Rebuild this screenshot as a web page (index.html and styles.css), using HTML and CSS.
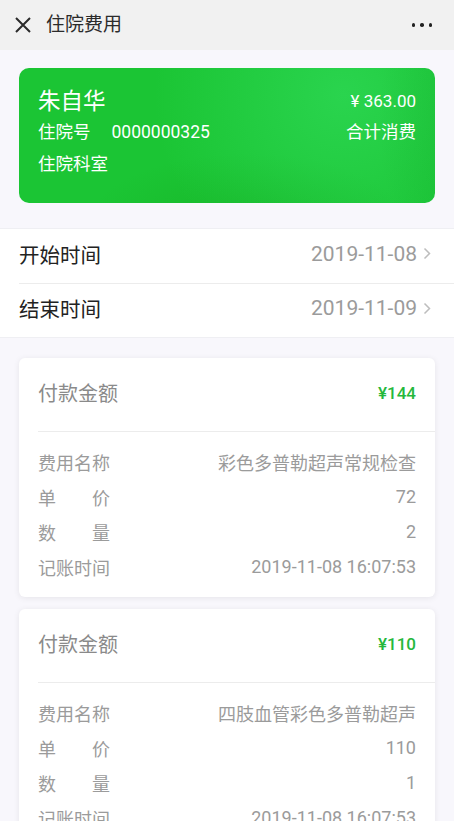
FILE: index.html
```html
<!DOCTYPE html>
<html lang="zh-CN">
<head>
  <meta charset="UTF-8" />
  <meta name="viewport" content="width=device-width, initial-scale=1" />
  <title>住院费用</title>
  <link rel="stylesheet" href="styles.css">
</head>
<body>
  <div class="topbar">
    <svg class="close-icon" width="16" height="16" viewBox="0 0 16 16">
      <path d="M1 1 L15 15 M15 1 L1 15" stroke="#2b2b2b" stroke-width="2" fill="none" />
    </svg>
    <span class="topbar-title">住院费用</span>
    <span class="more"><i></i><i></i><i></i></span>
  </div>

  <div class="patient-card">
    <div class="patient-row">
      <span class="patient-name">朱自华</span>
      <span class="patient-total">¥ 363.00</span>
    </div>
    <div class="patient-row">
      <span>住院号<span class="patient-no">0000000325</span></span>
      <span>合计消费</span>
    </div>
    <div class="patient-row">
      <span>住院科室</span>
    </div>
  </div>

  <div class="date-list">
    <div class="date-item">
      <span class="date-label">开始时间</span>
      <span class="date-value">2019-11-08
        <svg width="8" height="13" viewBox="0 0 8 13"><path d="M1.5 1.5 L6.5 6.5 L1.5 11.5" stroke="#bdbdbd" stroke-width="1.5" fill="none" /></svg>
      </span>
    </div>
    <div class="date-item">
      <span class="date-label">结束时间</span>
      <span class="date-value">2019-11-09
        <svg width="8" height="13" viewBox="0 0 8 13"><path d="M1.5 1.5 L6.5 6.5 L1.5 11.5" stroke="#bdbdbd" stroke-width="1.5" fill="none" /></svg>
      </span>
    </div>
  </div>

  <div class="fee-list">
    <div class="fee-card">
      <div class="fee-head">
        <span>付款金额</span>
        <span class="fee-amount">¥144</span>
      </div>
      <div class="fee-body">
        <div class="fee-row"><span class="fee-label">费用名称</span><span>彩色多普勒超声常规检查</span></div>
        <div class="fee-row"><span class="fee-label">单价</span><span>72</span></div>
        <div class="fee-row"><span class="fee-label">数量</span><span>2</span></div>
        <div class="fee-row"><span class="fee-label">记账时间</span><span>2019-11-08 16:07:53</span></div>
      </div>
    </div>

    <div class="fee-card">
      <div class="fee-head">
        <span>付款金额</span>
        <span class="fee-amount">¥110</span>
      </div>
      <div class="fee-body">
        <div class="fee-row"><span class="fee-label">费用名称</span><span>四肢血管彩色多普勒超声</span></div>
        <div class="fee-row"><span class="fee-label">单价</span><span>110</span></div>
        <div class="fee-row"><span class="fee-label">数量</span><span>1</span></div>
        <div class="fee-row"><span class="fee-label">记账时间</span><span>2019-11-08 16:07:53</span></div>
      </div>
    </div>
  </div>
</body>
</html>
```

FILE: styles.css
```css
body {
  font-family: Roboto, "Noto Sans CJK SC", sans-serif;
  background: #f8f7fc;
  margin: 0;
  padding: 0;
  color: #222;
}

/* top bar */
.topbar {
  height: 50px;
  background: #f1f1f1;
  display: flex;
  align-items: center;
  padding: 0 15px;
}
.close-icon {
  margin-right: 15px;
}
.topbar-title {
  font-size: 19px;
  line-height: 50px;
  color: #2b2b2b;
  flex: 1;
}
.more {
  display: flex;
  gap: 5px;
  margin-right: 7px;
}
.more i {
  width: 3.5px;
  height: 3.5px;
  border-radius: 50%;
  background: #222;
}

/* green card */
.patient-card {
  margin: 18px 19px 0;
  height: 135px;
  box-sizing: border-box;
  padding: 18px 19px 0;
  border-radius: 10px;
  color: #fff;
  background:
    radial-gradient(ellipse 140px 200px at 120% 40%, rgba(10, 150, 30, 0.35), rgba(10, 150, 30, 0) 100%),
    radial-gradient(ellipse 190px 190px at 78% 20%, rgba(60, 230, 110, 0.45), rgba(60, 230, 110, 0) 100%),
    radial-gradient(ellipse 160px 70px at 55% 115%, rgba(20, 170, 30, 0.5), rgba(20, 170, 30, 0) 100%),
    #1bc534;
}
.patient-row {
  display: flex;
  justify-content: space-between;
  font-size: 17.5px;
  line-height: 32px;
}
.patient-row:first-child {
  line-height: 30px;
}
.patient-name {
  font-size: 22.5px;
}
.patient-total {
  font-size: 17px;
}
.patient-no {
  margin-left: 21px;
}

/* date list */
.date-list {
  margin-top: 25px;
  background: #fff;
  border-top: 1px solid #efeff3;
  border-bottom: 1px solid #efeff3;
}
.date-item {
  margin-left: 19px;
  padding: 0 23px 5px 0;
  height: 54px;
  box-sizing: border-box;
  display: flex;
  align-items: center;
  justify-content: space-between;
}
.date-item + .date-item {
  border-top: 1px solid #ececec;
}
.date-label {
  font-size: 20.5px;
  color: #222;
}
.date-value {
  font-size: 21px;
  color: #9b9b9b;
  display: flex;
  align-items: center;
  gap: 6px;
}

/* fee cards */
.fee-list {
  padding: 20px 19px 20px;
  display: flex;
  flex-direction: column;
  gap: 12px;
}
.fee-card {
  background: #fff;
  border-radius: 6px;
  box-shadow: 0 1px 6px rgba(0, 0, 0, 0.08);
}
.fee-head {
  height: 74px;
  box-sizing: border-box;
  margin-left: 19px;
  padding: 0 19px 4px 0;
  display: flex;
  align-items: center;
  justify-content: space-between;
  border-bottom: 1px solid #ececec;
  font-size: 20px;
  color: #8a8a8a;
}
.fee-amount {
  font-size: 17px;
  font-weight: 500;
  color: #25b83c;
}
.fee-body {
  padding: 12px 19px 13px;
}
.fee-row {
  display: flex;
  justify-content: space-between;
  height: 35px;
  align-items: center;
  font-size: 18px;
  color: #9b9b9b;
}
.fee-label {
  width: 72px;
  text-align: justify;
  text-align-last: justify;
}
```
